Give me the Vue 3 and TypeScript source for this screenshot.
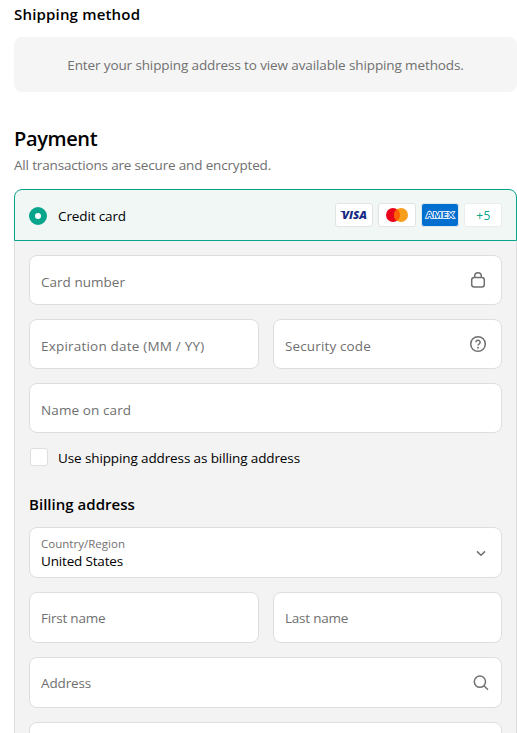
<script setup lang="ts">
import { ref } from 'vue'

const useShippingAddress = ref(false)
const payment = ref('card')
</script>

<template>
  <main class="checkout">
    <section>
      <h3 class="subtitle shipping-title">Shipping method</h3>
      <div class="notice">Enter your shipping address to view available shipping methods.</div>
    </section>

    <section class="payment">
      <h2 class="title">Payment</h2>
      <p class="secure">All transactions are secure and encrypted.</p>

      <div class="panel">
        <label class="method">
          <input v-model="payment" class="radio" type="radio" value="card" />
          <span class="method-name">Credit card</span>
          <span class="brands">
            <svg class="brand" viewBox="0 0 38 24">
              <rect x=".5" y=".5" width="37" height="23" rx="2.5" fill="#fff" stroke="#e0e4e3" />
              <path d="M5.2 8.1h3.6l.5 1.3H7.6C7 8.8 6.2 8.5 5.2 8.4z" fill="#172b85" />
              <text class="visa" x="7" y="15.8" textLength="25" lengthAdjust="spacingAndGlyphs">VISA</text>
            </svg>
            <svg class="brand" viewBox="0 0 38 24">
              <rect x=".5" y=".5" width="37" height="23" rx="2.5" fill="#fff" stroke="#e0e4e3" />
              <circle cx="15" cy="12" r="7" fill="#eb001b" />
              <circle cx="23" cy="12" r="7" fill="#f79e1b" />
              <path d="M22 12c0-2.4-1.2-4.5-3-5.7a7 7 0 0 0 0 11.4c1.8-1.2 3-3.3 3-5.7z" fill="#ff5f00" />
            </svg>
            <svg class="brand" viewBox="0 0 38 24">
              <rect x=".5" y=".5" width="37" height="23" rx="2.5" fill="#006fcf" stroke="#dbe9ed" />
              <text class="amex" x="5" y="15" textLength="28" lengthAdjust="spacingAndGlyphs">AMEX</text>
            </svg>
            <span class="more">+5</span>
          </span>
        </label>

        <div class="body">
          <div class="field">
            <span class="label card-number">Card number</span>
            <svg class="icon" viewBox="0 0 18 18">
              <rect x="2.7" y="6.6" width="12.6" height="9.3" rx="2.5" />
              <path d="M5.7 6.5V5a3.3 3.3 0 0 1 6.6 0v1.5" />
            </svg>
          </div>
          <div class="row">
            <div class="field"><span class="label expiry">Expiration date (MM / YY)</span></div>
            <div class="field">
              <span class="label code">Security code</span>
              <svg class="icon" viewBox="0 0 18 18">
                <circle cx="9" cy="9" r="7.3" />
                <path d="M6.9 7.2a2.1 2.1 0 1 1 3.1 1.9c-.7.4-1 .6-1 1.4" />
                <circle class="dot" cx="9" cy="12.8" r=".95" />
              </svg>
            </div>
          </div>
          <div class="field"><span class="label holder">Name on card</span></div>

          <label class="same">
            <input v-model="useShippingAddress" class="checkbox" type="checkbox" />
            <span>Use shipping address as billing address</span>
          </label>

          <h3 class="subtitle billing-title">Billing address</h3>

          <div class="field tall">
            <span class="stack">
              <span class="caption">Country/Region</span>
              <span class="value">United States</span>
            </span>
            <svg class="icon chevron" viewBox="0 0 18 18"><path d="m5 7.4 4 3.8 4-3.8" /></svg>
          </div>
          <div class="row">
            <div class="field tall"><span class="label name">First name</span></div>
            <div class="field tall"><span class="label name">Last name</span></div>
          </div>
          <div class="field tall">
            <span class="label address">Address</span>
            <svg class="icon search" viewBox="0 0 18 18">
              <circle cx="7.9" cy="7.7" r="5.6" />
              <path d="m12 11.8 4 3.9" />
            </svg>
          </div>
          <div class="field tall"></div>
        </div>
      </div>
    </section>
  </main>
</template>

<style>
body {
  background: #fff;
  overflow: hidden;
}
</style>

<style scoped>
.checkout {
  box-sizing: border-box;
  height: 733px;
  overflow: hidden;
  padding: 4px 0 0 14px;
  font: 13.5px/20px "Open Sans", "Noto Sans", sans-serif;
  color: #000;
}
h2, h3, p { margin: 0; }
.subtitle {
  font-size: 15px;
  line-height: 20px;
  font-weight: 600;
}
.shipping-title { letter-spacing: .18px; }
.billing-title { letter-spacing: .03px; margin: 12px 0 -1px; }
.notice {
  box-sizing: border-box;
  height: 55px;
  margin-top: 13px;
  padding-top: 18px;
  border-radius: 8px;
  background: #f5f5f5;
  color: #707070;
  text-align: center;
  letter-spacing: -.115px;
}
.payment { margin-top: 32px; }
.title {
  padding-top: 1px;
  font-size: 20px;
  line-height: 28px;
  font-weight: 600;
  letter-spacing: -.38px;
}
.secure {
  margin-top: 2px;
  color: #707070;
  letter-spacing: -.165px;
}
.panel { margin-top: 14px; }
.method {
  box-sizing: border-box;
  display: flex;
  align-items: center;
  height: 52px;
  padding: 1px 14px 0;
  border: 1px solid #08a48b;
  border-radius: 8px 8px 0 0;
  background: #f0f7f5;
}
.radio {
  appearance: none;
  box-sizing: border-box;
  width: 18px;
  height: 18px;
  margin: 0 11px 0 0;
  border: 6px solid #08a48b;
  border-radius: 50%;
  background: #fff;
}
.method-name { letter-spacing: -.12px; }
.brands {
  display: flex;
  gap: 5px;
  margin: -1px 0 0 auto;
}
.brand { width: 38px; height: 24px; }
.visa {
  fill: #172b85;
  font-size: 10.8px;
  font-weight: 800;
  font-style: italic;
}
.amex {
  fill: #006fcf;
  stroke: #fff;
  stroke-width: 1.5px;
  paint-order: stroke;
  font-size: 8.4px;
  font-weight: 700;
}
.more {
  box-sizing: border-box;
  width: 38px;
  height: 24px;
  padding: 1px 0 0 1px;
  border: 1px solid #e9eeec;
  border-radius: 3px;
  background: #fff;
  color: #08a48b;
  font-size: 12px;
  font-weight: 500;
  letter-spacing: .3px;
  line-height: 22px;
  text-align: center;
}
.body {
  display: flex;
  flex-direction: column;
  gap: 14px;
  padding: 14px 14px 20px;
  border: solid #dedede;
  border-width: 0 1px;
  background: #f3f3f3;
}
.row {
  display: grid;
  grid-template-columns: 230px 1fr;
  gap: 14px;
}
.field {
  box-sizing: border-box;
  display: flex;
  align-items: center;
  justify-content: space-between;
  height: 50px;
  padding: 0 14px 0 11px;
  border: 1px solid #dedede;
  border-radius: 8px;
  background: #fff;
}
.label {
  padding-top: 4px;
  color: #707070;
}
.tall { height: 51px; }
.tall .label { padding-top: 1px; }
.card-number { letter-spacing: .03px; }
.expiry { letter-spacing: .2px; }
.code { letter-spacing: .13px; }
.holder { letter-spacing: .11px; }
.name { letter-spacing: -.22px; }
.address { letter-spacing: -.12px; }
.icon {
  width: 18px;
  height: 18px;
  fill: none;
  stroke: #707070;
  stroke-width: 1.5;
}
.icon .dot { fill: #707070; stroke: none; }
.chevron, .search { margin-right: -3px; }
.same {
  display: flex;
  align-items: center;
  height: 20px;
  margin-top: 1px;
  padding-left: 1px;
  letter-spacing: -.115px;
}
.checkbox {
  appearance: none;
  box-sizing: border-box;
  width: 18px;
  height: 18px;
  margin: 0 10px 2px 0;
  border: 1px solid #dedede;
  border-radius: 3px;
  background: #fff;
}
.stack {
  display: flex;
  flex-direction: column;
}
.caption {
  color: #707070;
  font-size: 11.5px;
  line-height: 16px;
  letter-spacing: .02px;
}
.value {
  line-height: 18px;
  letter-spacing: -.17px;
}
</style>
